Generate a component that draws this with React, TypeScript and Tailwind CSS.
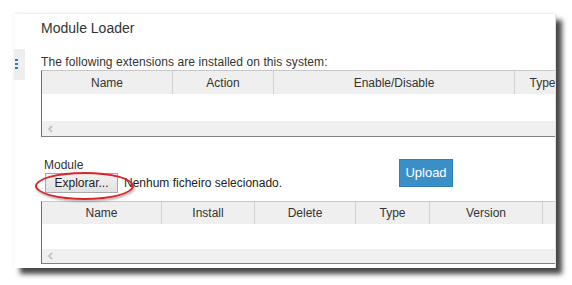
import React from 'react'

const font = { fontFamily: '"Liberation Sans", Arial, sans-serif' }

function ScrollRow({ h }: { h: string }) {
  return (
    <div className={`${h} bg-[#f0f0f0] flex items-center pl-[5px]`}>
      <svg width="7" height="8" viewBox="0 0 7 8">
        <polyline points="5,1 2,4 5,7" fill="none" stroke="#c4c4c4" strokeWidth="1.8" />
      </svg>
    </div>
  )
}

function Table({ cols, head, body, scroll }: { cols: { label: string; w: number }[]; head: string; body: string; scroll: string }) {
  return (
    <div className="w-[640px] border-t border-t-[#c8c8c8] border-l border-l-[#707070] border-b border-b-[#808080]">
      <div className={`${head} flex bg-[#efefef]`}>
        {cols.map((c, i) => (
          <div
            key={i}
            style={{ width: c.w }}
            className="shrink-0 border-r border-r-[#d2d2d2] flex items-center justify-center text-[12px] text-[#333]"
          >
            {c.label}
          </div>
        ))}
      </div>
      <div className={`${body} bg-white`} />
      <ScrollRow h={scroll} />
    </div>
  )
}

export default function App() {
  return (
    <div className="w-[572px] h-[285px] bg-white overflow-hidden pt-[14px] pl-[14px]" style={font}>
      <div className="w-[542px] h-[254px] bg-white flex overflow-hidden border-r border-r-[#e2e2e2] shadow-[6px_6px_5px_rgba(0,0,0,0.72),0_-1px_3px_rgba(0,0,0,0.08)]">
        {/* side tab */}
        <div className="w-[11px] shrink-0 pt-[35px]">
          <div className="h-[31px] bg-[#eeeeee] flex flex-col gap-[2px] pt-[10px] pl-[1px]">
            <div className="w-[3px] h-[2px] bg-[#2a7fc4]" />
            <div className="w-[3px] h-[2px] bg-[#2a7fc4]" />
            <div className="w-[3px] h-[2px] bg-[#2a7fc4]" />
          </div>
        </div>

        <div className="flex-1 pl-[16px] min-w-0">
          <div className="pt-[6px] text-[14px] leading-[17px] text-[#333]">Module Loader</div>
          <div className="mt-[18px] text-[12px] leading-[14px] text-[#333] whitespace-nowrap tracking-[0.07px]">
            The following extensions are installed on this system:
          </div>
          <div className="mt-[1px]">
            <Table
              head="h-[23px]"
              body="h-[27px]"
              scroll="h-[15px]"
              cols={[
                { label: 'Name', w: 131 },
                { label: 'Action', w: 101 },
                { label: 'Enable/Disable', w: 241 },
                { label: 'Type', w: 56 },
                { label: '', w: 100 },
              ]}
            />
          </div>

          {/* module upload */}
          <div className="mt-[21px] flex items-start">
            <div className="pl-[3px] w-[358px]">
              <div className="text-[12px] leading-[14px] text-[#333]">Module</div>
              <div className="relative mt-[1px] flex items-center gap-[6px] pl-[1px]">
                <div className="h-[20px] w-[73px] border border-[#a9a9a9] bg-[linear-gradient(#f2f2f2,#e1e1e1)] flex items-center justify-center text-[12px] text-[#222]">
                  Explorar...
                </div>
                <span className="text-[12px] text-[#222]">Nenhum ficheiro selecionado.</span>
                <div className="absolute left-[-9px] top-[-1px] w-[99px] h-[28px] rounded-[50%] border-2 border-[#d8262b] shadow-[1px_2px_2px_rgba(0,0,0,0.25)]" />
              </div>
            </div>
            <div className="mt-[1px] h-[28px] w-[54px] bg-[#3a8fc6] border border-[#2f7db3] flex items-center justify-center text-[13px] text-white">
              Upload
            </div>
          </div>

          <div className="mt-[8px]">
            <Table
              head="h-[22px]"
              body="h-[25px]"
              scroll="h-[14px]"
              cols={[
                { label: 'Name', w: 120 },
                { label: 'Install', w: 93 },
                { label: 'Delete', w: 101 },
                { label: 'Type', w: 74 },
                { label: 'Version', w: 113 },
                { label: '', w: 100 },
              ]}
            />
          </div>
        </div>
      </div>
    </div>
  )
}
